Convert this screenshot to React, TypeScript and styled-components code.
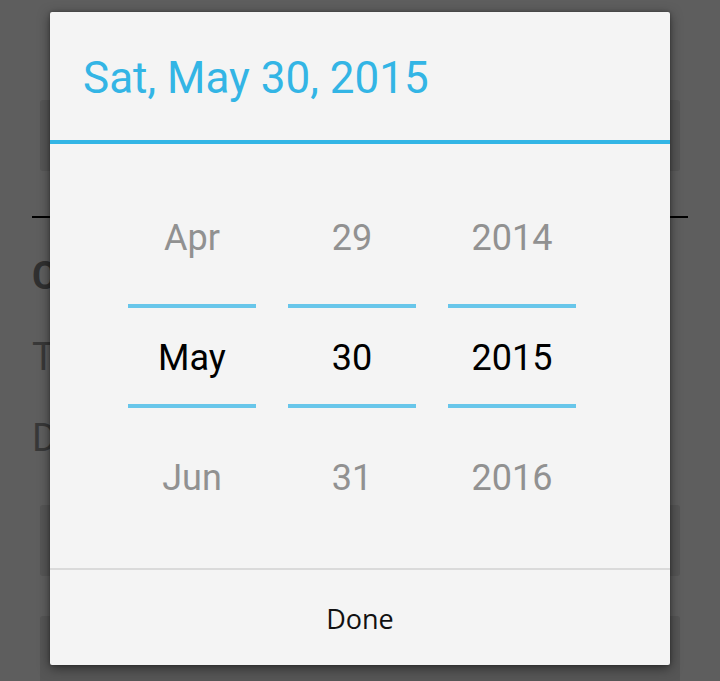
import React from "react";
import styled, { createGlobalStyle } from "styled-components";

const GlobalStyle = createGlobalStyle`
  html, body {
    margin: 0;
    padding: 0;
    width: 720px;
    height: 681px;
    overflow: hidden;
    background: #5e5e5e;
  }
  #root {
    position: relative;
    width: 720px;
    height: 681px;
  }
`;

const Page = styled.div`
  width: 720px;
  height: 681px;
  box-sizing: border-box;
  padding: 100px 32px 0;
  display: flex;
  flex-direction: column;
  font-family: Roboto, "Liberation Sans", sans-serif;
  overflow: hidden;
`;

const Field = styled.div<{ $mt: number }>`
  flex-shrink: 0;
  height: 71px;
  margin: ${(p) => p.$mt}px 8px 0;
  border-radius: 3px;
  background: #565656;
`;

const Rule = styled.div`
  flex-shrink: 0;
  height: 2px;
  margin-top: 45px;
  background: #000;
`;

const Line = styled.div<{ $mt: number; $bold?: boolean }>`
  flex-shrink: 0;
  margin-top: ${(p) => p.$mt}px;
  height: 46px;
  line-height: 46px;
  font-size: 38px;
  font-weight: ${(p) => (p.$bold ? 700 : 400)};
  color: ${(p) => (p.$bold ? "#303030" : "#383838")};
  white-space: nowrap;
`;

const Dialog = styled.div`
  position: absolute;
  top: 12px;
  left: 50px;
  width: 620px;
  height: 653px;
  background: #f4f4f4;
  border-radius: 2px;
  box-shadow: 0 3px 12px rgba(0, 0, 0, 0.5), 0 0 3px rgba(0, 0, 0, 0.3);
  display: flex;
  flex-direction: column;
  overflow: hidden;
`;

const Header = styled.div`
  height: 128px;
  box-sizing: border-box;
  padding: 3px 0 0 33px;
  display: flex;
  align-items: center;
  font-family: Roboto, "Liberation Sans", sans-serif;
  font-size: 44px;
  color: #33b5e5;
`;

const AccentRule = styled.div`
  height: 4px;
  background: #33b5e5;
`;

const Picker = styled.div`
  flex: 1;
  box-sizing: border-box;
  padding: 34px 0 0 78px;
  display: flex;
  gap: 32px;
  font-family: Roboto, "Liberation Sans", sans-serif;
`;

const Column = styled.div`
  width: 128px;
  display: flex;
  flex-direction: column;
`;

const Cell = styled.div`
  height: 120px;
  line-height: 120px;
  text-align: center;
  font-size: 36px;
  color: #919191;
`;

const SelectedCell = styled.div`
  height: 104px;
  box-sizing: border-box;
  margin: 6px 0 10px;
  padding-top: 4px;
  border-top: 4px solid #68c6ea;
  border-bottom: 4px solid #68c6ea;
  line-height: 92px;
  text-align: center;
  font-size: 36px;
  color: #000;
`;

const FooterRule = styled.div`
  height: 2px;
  background: #dadada;
`;

const Footer = styled.div`
  height: 95px;
  box-sizing: border-box;
  padding-top: 2px;
  display: flex;
  align-items: center;
  justify-content: center;
  font-family: "Open Sans", Roboto, sans-serif;
  font-size: 27px;
  color: #111;
`;

const columns = [
  ["Apr", "May", "Jun"],
  ["29", "30", "31"],
  ["2014", "2015", "2016"],
];

export default function App() {
  return (
    <>
      <GlobalStyle />
      <Page>
        <Field $mt={0} />
        <Rule />
        <Line $mt={35} $bold>
          Contact
        </Line>
        <Line $mt={35}>Title</Line>
        <Line $mt={35}>Date</Line>
        <Field $mt={44} />
        <Field $mt={40} />
      </Page>
      <Dialog>
        <Header>Sat, May 30, 2015</Header>
        <AccentRule />
        <Picker>
          {columns.map(([prev, cur, next]) => (
            <Column key={cur}>
              <Cell>{prev}</Cell>
              <SelectedCell>{cur}</SelectedCell>
              <Cell>{next}</Cell>
            </Column>
          ))}
        </Picker>
        <FooterRule />
        <Footer>Done</Footer>
      </Dialog>
    </>
  );
}
